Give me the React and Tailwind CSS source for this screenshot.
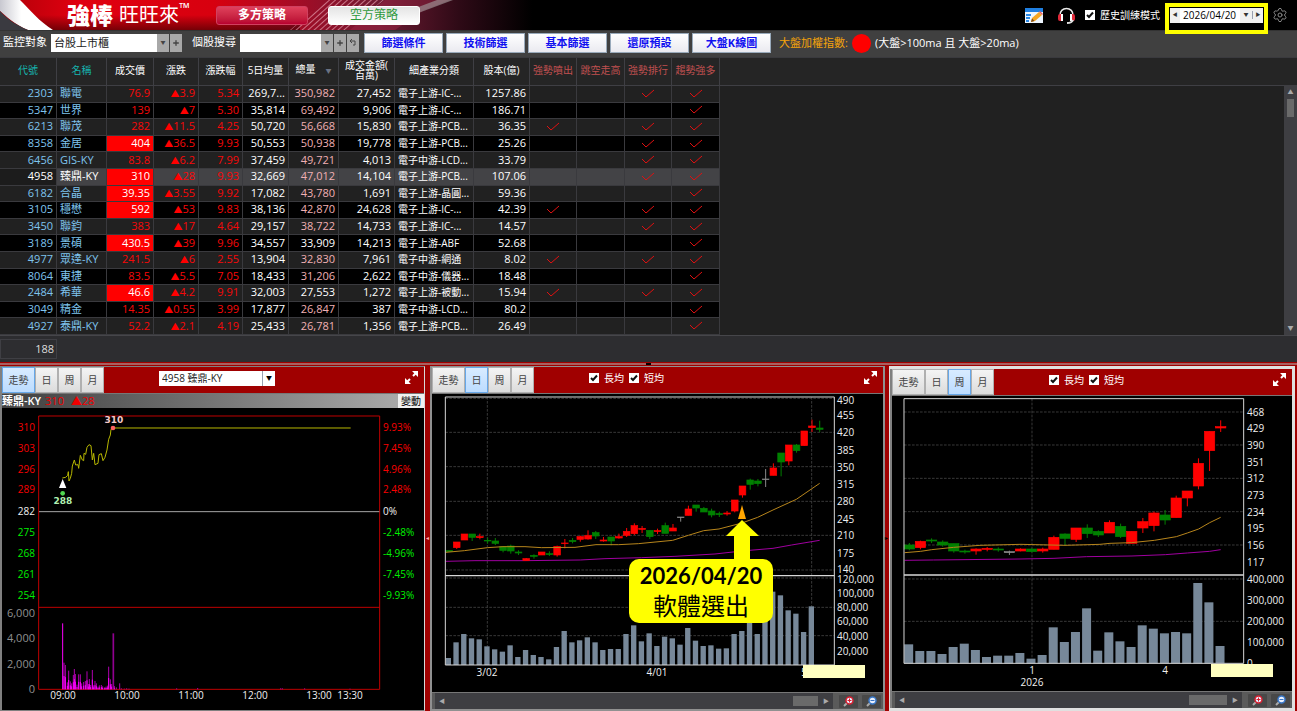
import { useState } from "react"
import { Plus, Settings } from "lucide-react"

const latin = "font-['Open_Sans','Noto_Sans_CJK_TC',sans-serif]"

const columns = [
  { label: "代號", width: "w-[57px]", color: "text-[#16b5b0]" },
  { label: "名稱", width: "w-[50px]", color: "text-[#16b5b0]" },
  { label: "成交價", width: "w-[47px]" },
  { label: "漲跌", width: "w-[45px]" },
  { label: "漲跌幅", width: "w-[44px]" },
  { label: "5日均量", width: "w-[46px]" },
  { label: "總量", width: "w-[50px]", sorted: true },
  { label: "成交金額(\n百萬)", width: "w-[56px]" },
  { label: "細產業分類", width: "w-[79px]" },
  { label: "股本(億)", width: "w-[56px]" },
  { label: "強勢噴出", width: "w-[47px]", color: "text-[#c05050]" },
  { label: "跳空走高", width: "w-[48px]", color: "text-[#c05050]" },
  { label: "強勢排行", width: "w-[47px]", color: "text-[#c05050]" },
  { label: "趨勢強多", width: "w-[48px]", color: "text-[#c05050]" },
]

// code, name, price, limit up, change, change %, 5 day avg, volume, amount, industry, capital, signals
const stocks = [
  ["2303", "聯電", "76.9", false, "3.9", "5.34", "269,7...", "350,982", "27,452", "電子上游-IC-...", "1257.86", [0, 0, 1, 1]],
  ["5347", "世界", "139", false, "7", "5.30", "35,814", "69,492", "9,906", "電子上游-IC-...", "186.71", [0, 0, 0, 1]],
  ["6213", "聯茂", "282", false, "11.5", "4.25", "50,720", "56,668", "15,830", "電子上游-PCB...", "36.35", [1, 0, 1, 1]],
  ["8358", "金居", "404", true, "36.5", "9.93", "50,553", "50,938", "19,778", "電子上游-PCB...", "25.26", [0, 0, 1, 1]],
  ["6456", "GIS-KY", "83.8", false, "6.2", "7.99", "37,459", "49,721", "4,013", "電子中游-LCD...", "33.79", [0, 0, 1, 1]],
  ["4958", "臻鼎-KY", "310", true, "28", "9.93", "32,669", "47,012", "14,104", "電子上游-PCB...", "107.06", [0, 0, 1, 1]],
  ["6182", "合晶", "39.35", true, "3.55", "9.92", "17,082", "43,780", "1,691", "電子上游-晶圓...", "59.36", [0, 0, 0, 1]],
  ["3105", "穩懋", "592", true, "53", "9.83", "38,136", "42,870", "24,628", "電子上游-IC-...", "42.39", [1, 0, 1, 1]],
  ["3450", "聯鈞", "383", false, "17", "4.64", "29,157", "38,722", "14,733", "電子上游-IC-...", "14.57", [0, 0, 1, 1]],
  ["3189", "景碩", "430.5", true, "39", "9.96", "34,557", "33,909", "14,213", "電子上游-ABF", "52.68", [0, 0, 0, 1]],
  ["4977", "眾達-KY", "241.5", false, "6", "2.55", "13,904", "32,830", "7,961", "電子中游-網通", "8.02", [1, 0, 1, 1]],
  ["8064", "東捷", "83.5", false, "5.5", "7.05", "18,433", "31,206", "2,622", "電子中游-儀器...", "18.48", [0, 0, 0, 1]],
  ["2484", "希華", "46.6", true, "4.2", "9.91", "32,003", "27,553", "1,272", "電子上游-被動...", "15.94", [1, 0, 1, 1]],
  ["3049", "精金", "14.35", false, "0.55", "3.99", "17,877", "26,847", "387", "電子中游-LCD...", "80.2", [0, 0, 0, 1]],
  ["4927", "泰鼎-KY", "52.2", false, "2.1", "4.19", "25,433", "26,781", "1,356", "電子上游-PCB...", "26.49", [0, 0, 0, 1]],
]

// candles: body top, body bottom, wick high, wick low, color (plot units, 3 per pixel)
const dayChart = {
  viewBox: "432 394 451 298",
  origin: [425, 360],
  frame: [61, 111, 1228, 915],
  split: 647,
  gridY: [115, 217, 320, 424, 526, 630, 654, 742, 827],
  gridX: [187, 1160],
  start: 72,
  step: 23.17,
  body: 20,
  candles: [
    [571, 575, 571, 575, "g"], [546, 563, 546, 567, "r"], [522, 540, 522, 540, "r"], [522, 532, 522, 543, "g"],
    [530, 533, 521, 538, "r"], [541, 543, 533, 551, "g"], [543, 550, 534, 555, "g"], [560, 571, 560, 577, "g"],
    [558, 573, 554, 581, "g"], [576, 579, 571, 585, "g"], [596, 602, 594, 602, "r"], [586, 589, 583, 596, "g"],
    [576, 585, 576, 585, "r"], [581, 584, 574, 588, "g"], [559, 585, 557, 590, "r"], [549, 551, 537, 565, "r"],
    [541, 545, 534, 550, "g"], [530, 538, 527, 545, "r"], [527, 537, 511, 539, "r"], [518, 528, 513, 537, "g"],
    [540, 543, 531, 545, "r"], [531, 543, 531, 556, "g"], [530, 534, 521, 536, "r"], [514, 526, 504, 531, "r"],
    [497, 521, 490, 525, "r"], [505, 508, 498, 519, "r"], [511, 530, 511, 537, "g"], [512, 515, 506, 522, "r"],
    [497, 520, 488, 520, "g"], [504, 513, 492, 513, "r"], [471, 473, 471, 485, "w"], [447, 466, 437, 466, "r"],
    [435, 444, 435, 455, "g"], [445, 456, 441, 456, "g"], [453, 465, 446, 472, "g"], [461, 464, 455, 471, "g"],
    [459, 462, 453, 467, "r"], [420, 453, 420, 457, "r"], [378, 405, 378, 413, "r"], [360, 373, 356, 389, "g"],
    [363, 371, 357, 379, "g"], [357, 359, 327, 381, "w"], [324, 346, 310, 346, "r"], [279, 306, 279, 349, "g"],
    [255, 303, 255, 316, "r"], [255, 272, 252, 278, "g"], [213, 257, 213, 257, "r"], [198, 203, 179, 216, "r"],
    [204, 208, 182, 216, "g"],
  ],
  volumes: [
    894, 847, 822, 835, 838, 859, 868, 875, 856, 891, 870, 885, 891, 898, 861, 813, 847, 841, 832, 847, 870, 867, 867,
    822, 796, 844, 820, 858, 830, 835, 854, 804, 842, 858, 856, 866, 865, 822, 813, 770, 822, 750, 695, 706, 751, 761,
    816, 739,
  ],
  longMa: "62,604 150,602 300,602 466,600 540,596 650,593 750,589 870,582 951,573 1044,565 1100,555 1184,541",
  shortMa:
    "62,577 118,572 187,563 234,560 300,560 350,563 450,562 513,554 581,554 640,551 743,541 790,526 836,512 882,507 951,489 998,472 1044,450 1114,418 1184,370",
  labelX: 837,
  labels: [
    ["490", 400], ["455", 415], ["420", 432], ["385", 450], ["350", 467], ["315", 484], ["280", 501], ["245", 519],
    ["210", 535], ["175", 553], ["140", 569], ["120,000", 579], ["100,000", 593], ["80,000", 607], ["60,000", 621],
    ["40,000", 636], ["20,000", 651],
  ],
  dates: [["3/02", 487, 672], ["4/01", 657, 672], ["5", 804, 672]],
  hint: [803, 665],
}

const weekChart = {
  viewBox: "892 396 400 295",
  origin: [880, 360],
  frame: [72, 116, 1091, 910],
  split: 645,
  gridY: [156, 255, 355, 455, 555, 657, 784],
  gridX: [456],
  start: 88,
  step: 33.36,
  body: 31,
  candles: [
    [555, 567, 549, 571, "g"], [544, 563, 542, 568, "r"], [540, 543, 535, 549, "g"], [546, 555, 541, 560, "g"],
    [551, 573, 551, 578, "g"], [573, 576, 569, 581, "g"], [567, 573, 565, 584, "r"], [565, 568, 561, 574, "r"],
    [567, 570, 562, 575, "g"], [575, 578, 572, 585, "w"], [567, 573, 565, 574, "r"], [567, 575, 565, 577, "g"],
    [567, 573, 563, 578, "r"], [532, 568, 527, 568, "r"], [522, 535, 520, 555, "g"], [504, 538, 504, 546, "r"],
    [504, 521, 493, 534, "g"], [514, 525, 511, 531, "g"], [487, 519, 481, 519, "r"], [499, 530, 491, 534, "g"],
    [514, 550, 514, 550, "r"], [485, 504, 474, 519, "r"], [459, 497, 455, 514, "r"], [465, 480, 450, 494, "g"],
    [414, 473, 407, 473, "r"], [393, 414, 393, 439, "r"], [310, 378, 295, 388, "r"], [214, 272, 214, 333, "r"],
    [200, 204, 181, 216, "r"],
  ],
  volumes: [
    853, 873, 873, 882, 861, 851, 870, 891, 887, 887, 879, 896, 885, 802, 846, 816, 745, 872, 817, 844, 861, 796, 806,
    820, 816, 820, 669, 727, 858,
  ],
  longMa: "74,601 160,600 423,597 522,595 620,590 756,588 856,584 922,579 989,574 1022,569",
  shortMa:
    "74,578 122,574 155,569 221,562 300,556 423,553 555,556 660,553 690,550 754,548 823,541 889,530 922,519 956,507 989,488 1022,472",
  labelX: 1247,
  labels: [
    ["468", 412], ["429", 428], ["390", 445], ["351", 462], ["312", 478], ["273", 495], ["234", 512], ["195", 528],
    ["156", 545], ["117", 562], ["400,000", 579], ["300,000", 600], ["200,000", 621], ["100,000", 642], ["0", 663],
  ],
  dates: [["1", 1032, 670], ["2026", 1032, 682], ["4", 1165, 670]],
  hint: [1211, 664],
}

const candleColor = { r: "#ff0000", g: "#008000", w: "#8a8a8a" }

// x, top of bar
const tickVolumes = [
  [192, 398], [196, 405], [202, 457], [206, 422], [211, 454], [215, 460], [220, 435], [223, 417], [226, 432], [231, 464],
  [236, 433], [241, 433], [245, 460], [251, 456], [256, 453], [261, 424], [265, 462], [268, 447], [272, 465], [277, 420],
  [281, 466], [285, 453], [289, 460], [294, 470], [298, 466], [304, 465], [308, 469], [314, 472], [318, 470], [322, 467],
  [326, 410], [331, 448], [335, 462], [343, 468], [349, 472], [359, 460], [364, 475], [373, 476], [380, 475], [387, 476],
  [530, 475], [593, 474], [842, 475], [847, 475], [914, 475], [1050, 476],
]

const levels = [
  ["310", "9.93%", 428], ["303", "7.45%", 449], ["296", "4.96%", 470], ["289", "2.48%", 490], ["282", "0%", 512],
  ["275", "-2.48%", 533], ["268", "-4.96%", 554], ["261", "-7.45%", 575], ["254", "-9.93%", 596],
]

function levelFill(y) {
  if (y < 512) return "fill-[#f80000]"
  return y > 512 ? "fill-[#00f000]" : "fill-[#f0f0f0]"
}

function Banner() {
  return (
    <svg className="absolute top-0 left-0 h-full w-[560px]" viewBox="0 0 560 30" aria-hidden="true">
      <defs>
        <linearGradient id="red" x1="0" x2="1" y1="0" y2="0">
          <stop offset="0" stopColor="#b00008" />
          <stop offset="0.14" stopColor="#e00010" />
          <stop offset="0.38" stopColor="#d8000f" />
          <stop offset="0.52" stopColor="#a80b25" />
          <stop offset="0.68" stopColor="#6d1a32" />
          <stop offset="0.82" stopColor="#2e0a16" />
          <stop offset="0.95" stopColor="#000" />
        </linearGradient>
        <linearGradient id="shade" x1="0" x2="0" y1="0" y2="1">
          <stop offset="0.5" stopColor="#300" stopOpacity="0" />
          <stop offset="1" stopColor="#300" stopOpacity="0.6" />
        </linearGradient>
        <linearGradient id="paper" x1="0" x2="1" y1="0" y2="0">
          <stop offset="0" stopColor="#c8c8d0" />
          <stop offset="0.4" stopColor="#fff" />
        </linearGradient>
        <pattern id="hatch" width="4" height="4" patternUnits="userSpaceOnUse" patternTransform="rotate(48)">
          <rect width="1" height="4" fill="#e8a0b0" opacity="0.7" />
        </pattern>
      </defs>
      <rect width="560" height="30" fill="url(#red)" />
      <rect width="300" height="30" fill="url(#shade)" />
      <path d="M290 30 326 0H384L345 30Z" fill="url(#hatch)" />
      <path d="M395 30 424 10 450 0H385L350 30Z" fill="#a02848" opacity="0.45" />
      <path d="M405 18 453 0H437L405 12Z" fill="#9a8f92" opacity="0.7" />
      <path d="M0 0H20C30 10 40 22 53 30H28C14 24 6 16 0 11Z" fill="url(#paper)" />
      <path d="M0 11C8 20 18 26 28 30H0Z" fill="#3a3a40" />
    </svg>
  )
}

function Check({ label, className = "" }) {
  return (
    <label className={`flex items-center gap-[5px] ${className}`}>
      <span className="relative flex">
        <input type="checkbox" defaultChecked className="peer size-[10px] appearance-none bg-white" />
        <svg className="pointer-events-none absolute inset-0 hidden size-[10px] peer-checked:block" viewBox="0 0 10 10">
          <path d="M2 5 4 7 8 2.500" fill="none" stroke="#111" strokeWidth="2" />
        </svg>
      </span>
      {label}
    </label>
  )
}

function Header() {
  return (
    <header className="relative flex h-[31px] items-center border-b border-[#333] bg-black text-white">
      <Banner />
      <h1 className="relative ml-[67px] flex w-[149px] items-center whitespace-nowrap">
        <span className="text-[23px] leading-[28px] font-black">強棒</span>
        <span className="ml-[6px] text-[20px] leading-[28px]">旺旺來</span>
        <sup className="text-[14px]">™</sup>
      </h1>
      <button className="relative h-[19px] w-[92px] rounded-[3px] border border-[#d04060] bg-linear-to-b from-[#e0405c] to-[#b80030] text-[12px] leading-[16px] font-bold">
        多方策略
      </button>
      <button className="relative ml-5 h-[19px] w-[92px] rounded-[3px] border border-white bg-linear-to-b from-[#e4e4e4] to-white text-[12px] leading-[16px] text-[#2f9a3c]">
        空方策略
      </button>

      <div className="mr-[9px] ml-auto flex items-center">
        <button aria-label="編輯" className="mr-[14px]">
          <svg className="h-[15px] w-[18px]" viewBox="0 0 18 15">
            <rect width="18" height="15" fill="#eef6ff" />
            <rect width="18" height="4" fill="#1f7fe0" />
            <path d="M1 6h5v2H1zM1 9h4v2H1zM1 12h3v2H1z" fill="#2a8ae8" />
            <path d="M6 14 7 10 14 4 17 7 10 13Z" fill="#f5a623" />
            <path d="M14 4 15 3 18 6 17 7Z" fill="#e8606a" />
            <path d="M6 14 7 10.500 9.500 13Z" fill="#7a4a1a" />
          </svg>
        </button>
        <button aria-label="客服" className="mr-[9px]">
          <svg className="h-[17px] w-[19px]" viewBox="0 0 19 17">
            <path d="M3 9C2 -1 17 -1 16 9" fill="none" stroke="#e8e8e8" strokeWidth="1.500" />
            <rect x="1" y="7" width="5" height="7" rx="2" fill="#e02838" />
            <rect x="13" y="7" width="5" height="7" rx="2" fill="#e02838" />
            <rect x="4" y="7" width="2" height="7" fill="#fff" />
            <rect x="13" y="7" width="2" height="7" fill="#fff" />
            <path d="M16 13Q15 16 10 16" fill="none" stroke="#ddd" strokeWidth="2" />
          </svg>
        </button>
        <Check label="歷史訓練模式" className="mr-[10px] text-[10px]" />
        <div className="relative flex h-[15px] items-center bg-[#f0f0f0] text-[#333]">
          <button aria-label="前一日" className="w-[10px] text-[5px]">◀</button>
          <input
            aria-label="日期"
            defaultValue="2026/04/20"
            className="h-[15px] w-[60px] bg-white pl-[3px] text-[10px] text-black"
          />
          <button aria-label="選擇日期" className="w-[12px] text-[5px]">▼</button>
          <button aria-label="後一日" className="w-[11px] border-l border-gray-400 text-[5px]">▶</button>
          <span className="pointer-events-none absolute -top-[5px] -right-[5px] -left-[5px] h-[31px] border-4 border-[#ffff00]" />
        </div>
        <button aria-label="設定" className="ml-[9px] text-[#8a8a8a]">
          <Settings size={16} strokeWidth={1.5} />
        </button>
      </div>
    </header>
  )
}

const miniButton = "flex h-[18px] w-[12px] items-center justify-center bg-[#a8a8a8] text-[5px] text-[#444]"

function Toolbar() {
  return (
    <div className="flex h-[26px] items-center bg-[#404040] pb-[3px] pl-[3px] text-[11px] text-white">
      <label htmlFor="watch">監控對象</label>
      <select id="watch" className="ml-[4px] h-[18px] w-[106px] appearance-none bg-white pl-[3px] leading-[18px] text-[#222]">
        <option>台股上市櫃</option>
      </select>
      <button aria-label="展開" className={miniButton}>▼</button>
      <button aria-label="新增" className={`ml-px ${miniButton}`}>
        <Plus size={8} strokeWidth={4} />
      </button>
      <label htmlFor="search" className="ml-[10px]">個股搜尋</label>
      <input id="search" className="ml-[4px] h-[18px] w-[81px] bg-white px-1 text-black" />
      <button aria-label="搜尋" className={miniButton}>▼</button>
      <button aria-label="加入" className={`ml-px ${miniButton}`}>
        <Plus size={8} strokeWidth={4} />
      </button>
      <button aria-label="返回" className={`ml-px ${miniButton}`}>
        <svg className="size-[8px]" viewBox="0 0 8 8">
          <path d="M3 0 1 2 3 4M1 2H6V6H4" fill="none" stroke="#444" />
        </svg>
      </button>
      <div className="ml-[5px] flex gap-[3px]">
        {["篩選條件", "技術篩選", "基本篩選", "還原預設", "大盤K線圖"].map((label) => (
          <button
            key={label}
            className="h-[20px] w-[79px] border border-[#9ab] bg-linear-to-b from-white to-[#eaeaf0] text-[11px] leading-[16px] font-bold text-[#1010f0]"
          >
            {label}
          </button>
        ))}
      </div>
      <div className="ml-[8px] flex items-center gap-[4px] pt-[2px]">
        <span className="text-[#f5a30a]">大盤加權指數:</span>
        <span className="size-[19px] rounded-full bg-[#ff0000]" />
        <span>(大盤&gt;100ma 且 大盤&gt;20ma)</span>
      </div>
    </div>
  )
}

function Tick() {
  return (
    <svg className="mx-auto h-[9px] w-[14px]" viewBox="0 0 14 9">
      <path d="M1 4 5 8 13 1" fill="none" stroke="#e01010" />
    </svg>
  )
}

function StockRow({ stock, index }) {
  const [code, name, price, limitUp, change, percent, average, volume, amount, industry, capital, signals] = stock
  const selected = code === "4958"
  const dimVolume = code !== "3189" && code !== "2484"
  const base = "border-r border-b border-[#3a3a3e] px-[3px] pb-px"
  const cell = `${base} text-right`
  let rowColor = index % 2 ? "bg-black" : "bg-[#212121]"
  if (selected) rowColor = "bg-[#434346]"

  return (
    <tr className={rowColor}>
      <td className={`${cell} ${selected ? "bg-[#1c1c1c] text-white" : "text-[#7fc4ee]"}`}>{code}</td>
      <td className={`${base} text-left ${selected ? "text-white" : "text-[#7fc4ee]"}`}>{name}</td>
      <td className={`${cell} ${limitUp ? "bg-[#ff0000] text-white" : "text-[#f80808]"}`}>{price}</td>
      <td className={`${cell} text-[#f80808]`}>
        <span className="text-[9px] leading-none text-[#ff0000]">▲</span>
        {change}
      </td>
      <td className={`${cell} text-[#f80808]`}>{percent}</td>
      <td className={cell}>{average}</td>
      <td className={`${cell} ${dimVolume ? "text-[#f0b0b4]" : ""}`}>{volume}</td>
      <td className={cell}>{amount}</td>
      <td className={`${base} text-left text-[10px]`}>{industry}</td>
      <td className={cell}>{capital}</td>
      {signals.map((on, i) => (
        <td key={i} className={base}>{on ? <Tick /> : null}</td>
      ))}
    </tr>
  )
}

function StockTable() {
  return (
    <section className="border-t border-[#3a3a3e] bg-[#212121]">
      <div className="flex bg-[#252525]">
        <table className="h-[277px] w-[720px] shrink-0 table-fixed border-separate border-spacing-0 text-[11px] leading-[14px] whitespace-nowrap text-white">
          <thead>
            <tr className="h-[28px]">
              {columns.map((col) => (
                <th
                  key={col.label}
                  className={`${col.width} ${col.color || ""} border-r border-b border-[#3f3f44] pb-[3px] text-[10px] leading-[10px] font-normal whitespace-pre`}
                >
                  {col.label}
                  {col.sorted && <span className="ml-[10px] text-[6px] text-gray-500">▼</span>}
                </th>
              ))}
            </tr>
          </thead>
          <tbody>
            {stocks.map((stock, i) => (
              <StockRow key={stock[0]} stock={stock} index={i} />
            ))}
          </tbody>
        </table>
        <div className="mt-[27px] grow border-t border-[#3f3f44] bg-[#212121]" />
        <div className="mt-[27px] flex w-[13px] flex-col items-center justify-between bg-[#3e3e42] py-[4px] text-[6px] leading-[6px] text-[#aaa]">
          <span>▲</span>
          <span className="mt-[4px] mb-auto h-[18px] w-[7px] bg-[#6a6a6a]" />
          <span>▼</span>
        </div>
      </div>
      <div className="flex h-[27px] items-center border-t border-[#46464a] bg-[#2d2d30]">
        <span className="h-[20px] w-[57px] border border-[#3f3f44] pr-[2px] text-right text-[11px] leading-[18px] text-[#ddd]">
          188
        </span>
      </div>
    </section>
  )
}

function PanelBar({ active, children }) {
  const [tab, setTab] = useState(active)

  return (
    <div className="flex h-[27px] items-stretch border-b border-[#777] bg-[#a00000] text-[10px] text-white">
      {["走勢", "日", "周", "月"].map((name) => (
        <button
          key={name}
          onClick={() => setTab(name)}
          className={`border ${name.length > 1 ? "w-[33px]" : "w-[23px]"} ${
            name === tab
              ? "border-[#66a7e8] bg-linear-to-b from-[#d8ebff] to-[#bcdcff] text-[#444]"
              : "border-[#b0b0b0] bg-linear-to-b from-[#f4f4f4] to-[#dcdcdc] text-[#444]"
          }`}
        >
          {name}
        </button>
      ))}
      <div className="ml-[55px] flex items-center gap-[5px] pb-[4px]">{children}</div>
      <button aria-label="放大" className="mr-[5px] ml-auto pb-[6px]">
        <svg className="size-[15px]" viewBox="0 0 15 15">
          <path d="M9 6 13 2M6 9 2 13" stroke="#fff" strokeWidth="2" />
          <path d="M8 1H14V7ZM1 8V14H7Z" fill="#fff" />
        </svg>
      </button>
    </div>
  )
}

function TrendPanel() {
  return (
    <section className="flex min-w-0 flex-col border-y border-r border-l-2 border-[#808080] border-r-[#d8d8d8] bg-black">
      <PanelBar active="走勢">
        <div className="relative">
          <select
            aria-label="股票"
            className="block h-[15px] w-[116px] appearance-none bg-white pl-[3px] text-[10px] leading-[15px] text-[#222]"
          >
            <option>4958 臻鼎-KY</option>
          </select>
          <span className="pointer-events-none absolute inset-y-0 right-0 flex w-[13px] items-center justify-center border-l border-gray-400 text-[6px] text-black">
            ▼
          </span>
        </div>
      </PanelBar>
      <div className="flex h-[14px] items-center gap-[4px] bg-linear-to-r from-[#404040] to-[#b0b0b0] text-[12px] leading-[14px] text-[#f00000]">
        <span className="text-[11px] font-semibold text-white">臻鼎-KY</span>
        <span className="text-[11px]">310</span>
        <span className="ml-[3px] text-[11px]">▲28</span>
        <button className="ml-auto h-[14px] bg-[#f0f0f0] px-[3px] text-[10px] leading-[14px] text-black">變動</button>
      </div>
      <svg className="block w-full" viewBox="2 408 422 302" fontSize="10">
        <g transform="translate(0 360) scale(0.33333)" fill="none" strokeWidth="3">
          <path d="M116 168H1139V988H116ZM116 742H1139" stroke="#c00000" />
          <path d="M117 455H1138" stroke="#a8a8a8" />
          <polyline
            stroke="#b8b800"
            points="187,354 197,352 203,346 205,335 207,363 211,355 215,340 217,318 223,300 227,315 234,314 236,325 241,286 247,300 251,302 252,280 257,283 261,262 267,254 273,257 277,300 281,280 285,314 294,310 297,284 304,281 309,302 315,292 321,270 326,238 331,225 333,208 339,204 1052,204"
          />
          {tickVolumes.map(([x, top]) => (
            <path key={x} d={`M${x} 988V${top + 510}`} stroke="#b000b0" />
          ))}
          {tickVolumes.slice(0, 34).map(([x, top]) => (
            <path key={x} d={`M${x} 988V${top + 510 + (478 - top) / 2}`} stroke="#ff00ff" />
          ))}
          <path d="M188 988V790" stroke="#ff00ff" />
          <path d="M340 988V820" stroke="#900090" strokeWidth="5" />
          <path d="M188 357 199 384H177Z" fill="#fff" />
          <circle cx="188" cy="400" r="7" fill="#50d850" />
          <circle cx="339" cy="204" r="7" fill="#ff6060" />
        </g>
        {levels.map(([price, percent, y]) => (
          <g key={price} className={levelFill(y)}>
            <text x="35" y={y + 3} textAnchor="end">{price}</text>
            <text x="383" y={y + 3}>{percent}</text>
          </g>
        ))}
        <g className="fill-[#909090]" fontSize="11" textAnchor="end">
          <text x="35" y="617">6,000</text>
          <text x="35" y="642">4,000</text>
          <text x="35" y="668">2,000</text>
          <text x="35" y="693">0</text>
        </g>
        <g className="fill-[#f0f0f0]" textAnchor="middle">
          <text x="63" y="699">09:00</text>
          <text x="127" y="699">10:00</text>
          <text x="191" y="699">11:00</text>
          <text x="255" y="699">12:00</text>
          <text x="319" y="699">13:00</text>
          <text x="350" y="699">13:30</text>
        </g>
        <g className="font-['DejaVu_Sans'] font-bold" fontSize="9" textAnchor="middle">
          <text x="114" y="423" className="fill-[#f4c8c8]">310</text>
          <text x="63" y="504" className="fill-[#b0f0b0]">288</text>
        </g>
      </svg>
    </section>
  )
}

function KChart({ chart, children }) {
  const [left, top, right, bottom] = chart.frame
  const [ox, oy] = chart.origin
  const at = (i) => chart.start + i * chart.step

  return (
    <svg className="block w-full bg-black" viewBox={chart.viewBox} fontSize="10">
      <g transform={`translate(${ox} ${oy}) scale(0.33333)`} fill="none" strokeWidth="3">
        <g stroke="#383838" strokeDasharray="8 4">
          {chart.gridY.map((y) => <path key={y} d={`M${left} ${y}H${right}`} />)}
          {chart.gridX.map((x) => <path key={x} d={`M${x} ${top}V${bottom}`} />)}
        </g>
        {chart.volumes.map((y, i) => (
          <rect key={i} x={at(i) - chart.body / 2} y={y} width={chart.body - 4} height={bottom - y} fill="#778899" />
        ))}
        <polyline points={chart.longMa} stroke="#a000a0" />
        {chart.candles.map(([bodyTop, bodyBottom, high, low, color], i) => (
          <g key={i} stroke={candleColor[color]} strokeWidth="2">
            <path d={`M${at(i)} ${high}V${low}`} strokeWidth="3" />
            <rect
              x={at(i) - chart.body / 2}
              y={bodyTop}
              width={chart.body}
              height={bodyBottom - bodyTop}
              fill={candleColor[color]}
            />
          </g>
        ))}
        <polyline points={chart.shortMa} stroke="#b8861c" />
        <path d={`M${left} ${top}H${right}V${bottom}H${left}Z`} stroke="#d8d8d8" />
        <path d={`M${left} ${chart.split}H${right}`} stroke="#d8d8d8" strokeWidth="4" />
      </g>
      <g className="fill-[#f0f0f0]">
        {chart.labels.map(([text, y]) => <text key={text} x={chart.labelX} y={y + 4}>{text}</text>)}
      </g>
      <g className="fill-[#f0f0f0]" textAnchor="middle">
        {chart.dates.map(([text, x, y]) => <text key={text} x={x} y={y + 4}>{text}</text>)}
      </g>
      <rect x={chart.hint[0]} y={chart.hint[1]} width="62" height="13" fill="#ffffc0" />
      {children}
    </svg>
  )
}

function Magnifier({ color, plus }) {
  return (
    <button
      aria-label={plus ? "放大圖表" : "縮小圖表"}
      className="flex h-[15px] w-[21px] items-center justify-center rounded-[2px] border border-[#5a5a5a] bg-[#484848]"
    >
      <svg className="size-[11px]" viewBox="0 0 11 11">
        <path d="M1 10 4 7" stroke="#aaa" strokeWidth="2" />
        <circle cx="6.500" cy="4.500" r="3.500" fill="#e8f0ff" stroke={color} strokeWidth="1.500" />
        <path d={plus ? "M4.500 4.500H8.500M6.500 2.500V6.500" : "M4.500 4.500H8.500"} stroke={color} />
      </svg>
    </button>
  )
}

function ChartScroll({ thumb }) {
  return (
    <div className="flex h-[17px] items-center gap-[2px] border-t border-[#777] bg-[#5a5a5a] pr-px pl-[3px]">
      <div className="mr-[3px] flex h-full grow items-center bg-[#3e3e42] px-[4px] text-[6px] leading-[8px] text-[#aaa]">
        <span>◀</span>
        <span className={`mr-[5px] ml-auto h-[10px] bg-[#6a6a6a] ${thumb}`} />
        <span>▶</span>
      </div>
      <Magnifier color="#d82030" plus />
      <Magnifier color="#3a78c8" />
    </div>
  )
}

function DayPanel() {
  return (
    <section className="min-w-0 border-x-2 border-t border-b-2 border-[#909090] bg-black">
      <PanelBar active="日">
        <Check label="長均" />
        <Check label="短均" />
      </PanelBar>
      <div className="relative">
        <KChart chart={dayChart}>
          <path d="M742 505 746 519H738Z" fill="#ffa500" />
          <path d="M742 520 759 536H750V562H734V536H726Z" fill="#ffff00" />
        </KChart>
        <div className="absolute top-[165px] left-[197px] flex h-[64px] w-[144px] flex-col items-center justify-center rounded-[10px] bg-[#ffff00] text-black">
          <strong className="font-['Lato'] text-[22px] leading-[30px]">2026/04/20</strong>
          <span className="text-[24px] leading-[30px]">軟體選出</span>
        </div>
      </div>
      <ChartScroll thumb="w-[25px]" />
    </section>
  )
}

function WeekPanel() {
  return (
    <section className="min-w-0 border-l border-[#a00000] bg-black">
      <div className="border-y-3 border-r-3 border-l border-[#e0e0e0]">
        <div className="border-l-2 border-[#808080]">
          <PanelBar active="周">
            <Check label="長均" />
            <Check label="短均" />
          </PanelBar>
          <KChart chart={weekChart} />
          <ChartScroll thumb="w-[38px]" />
        </div>
      </div>
    </section>
  )
}

function App() {
  return (
    <div className={`min-h-screen bg-[#a00000] ${latin}`}>
      <Header />
      <Toolbar />
      <StockTable />
      <div className="flex h-[4px] justify-center border-y border-[#a00000] bg-[#a86060]">
        <span className="h-[2px] w-[5px] bg-black" />
      </div>
      <main className="grid grid-cols-[425fr_5px_455fr_3px_407fr_2px]">
        <TrendPanel />
        <div className="self-center text-center text-[6px] text-[#ffb0b0]">◂</div>
        <DayPanel />
        <div className="self-center text-center text-[6px] text-black">▸</div>
        <WeekPanel />
        <div />
      </main>
    </div>
  )
}

export default App
